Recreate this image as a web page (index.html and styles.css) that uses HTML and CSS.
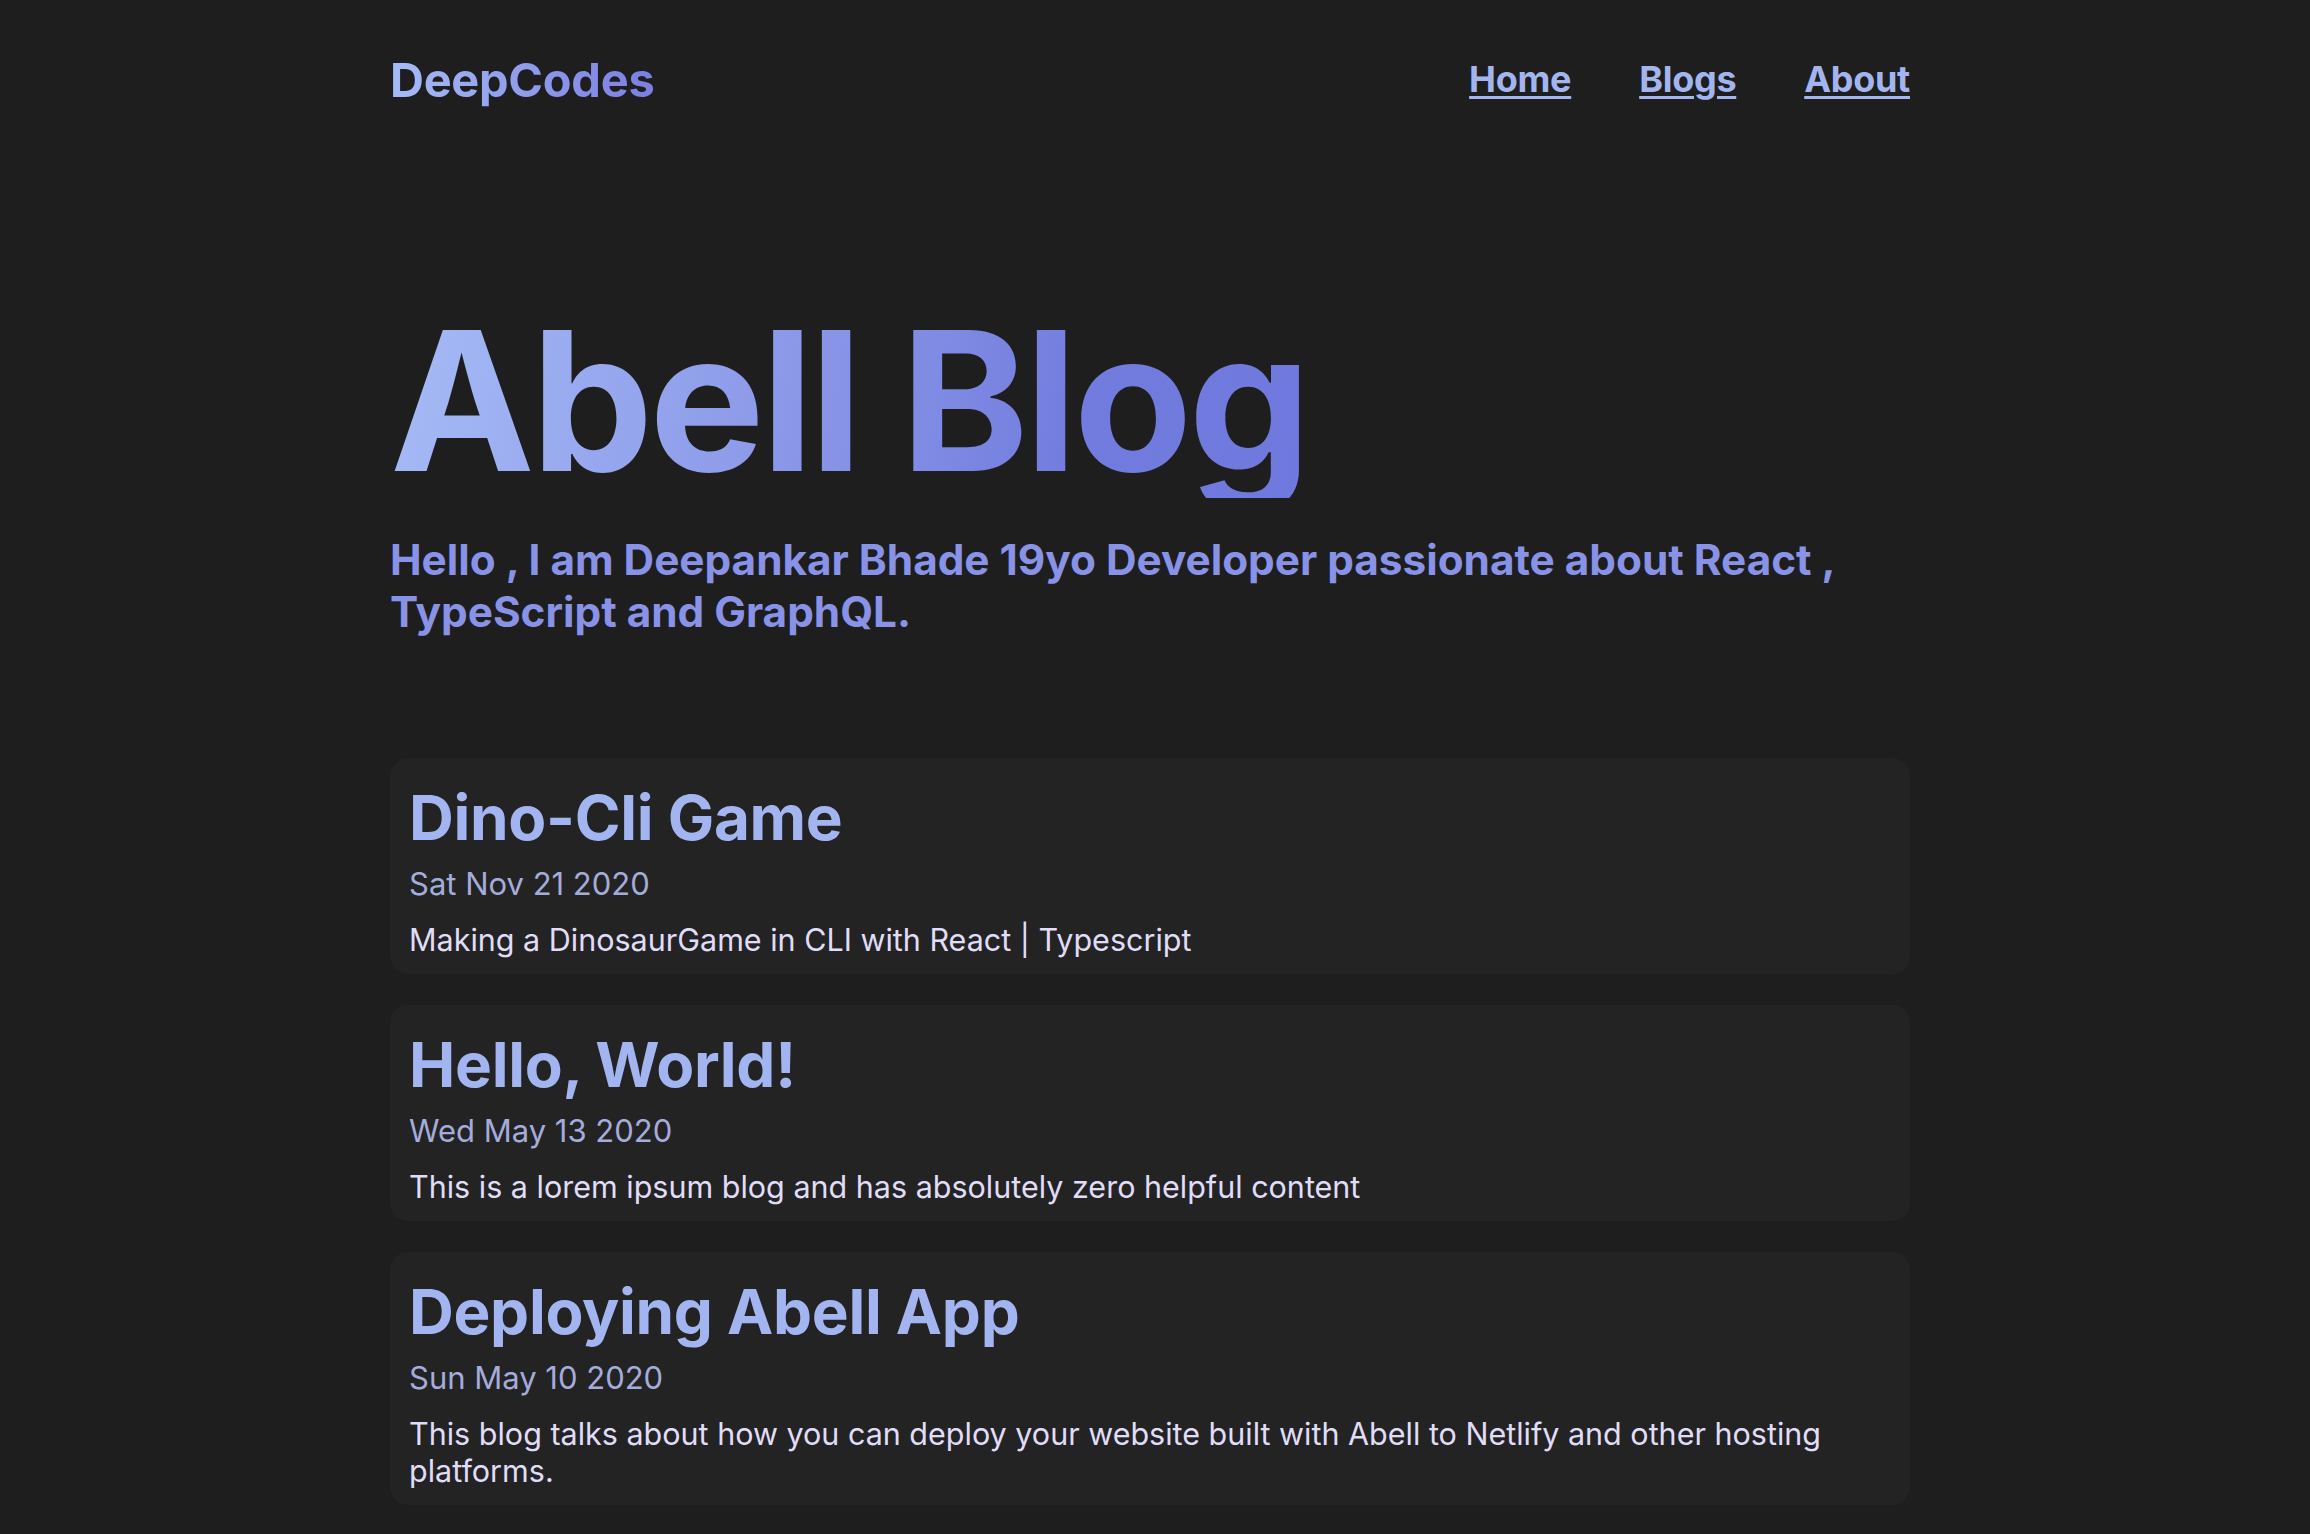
FILE: index.html
```html
<!DOCTYPE html>
<html lang="en">
<head>
<meta charset="utf-8">
<title>DeepCodes</title>
<link rel="stylesheet" href="styles.css">
</head>
<body>
<div class="container">
  <header class="site-header">
    <a class="brand" href="#">DeepCodes</a>
    <nav class="nav">
      <a href="#">Home</a>
      <a href="#">Blogs</a>
      <a href="#">About</a>
    </nav>
  </header>
  <main>
    <section class="hero">
      <h1 class="hero-title">Abell Blog</h1>
      <p class="hero-sub">Hello , I am Deepankar Bhade 19yo Developer passionate about React , TypeScript and GraphQL.</p>
    </section>
    <section class="posts">
      <article class="post">
        <h2 class="post-title">Dino-Cli Game</h2>
        <div class="post-date">Sat Nov 21 2020</div>
        <p class="post-desc">Making a DinosaurGame in CLI with React | Typescript</p>
      </article>
      <article class="post">
        <h2 class="post-title">Hello, World!</h2>
        <div class="post-date">Wed May 13 2020</div>
        <p class="post-desc">This is a lorem ipsum blog and has absolutely zero helpful content</p>
      </article>
      <article class="post">
        <h2 class="post-title">Deploying Abell App</h2>
        <div class="post-date">Sun May 10 2020</div>
        <p class="post-desc">This blog talks about how you can deploy your website built with Abell to Netlify and other hosting platforms.</p>
      </article>
    </section>
  </main>
</div>
</body>
</html>
```

FILE: styles.css
```css
html, body {
  margin: 0;
  padding: 0;
  background: #1e1e1e;
}

body {
  font-family: Inter, "Noto Sans", "Liberation Sans", sans-serif;
  color: #e0ddf8;
  padding-right: 10px;
}

.container {
  width: 1520px;
  margin: 0 auto;
}

.site-header {
  display: flex;
  justify-content: space-between;
  align-items: center;
  padding-top: 51px;
}

.brand {
  font-size: 47px;
  line-height: 57px;
  font-weight: 700;
  text-decoration: none;
  letter-spacing: -0.3px;
  background: linear-gradient(90deg, #a6bbf6 0%, #7a7fe2 100%);
  -webkit-background-clip: text;
  background-clip: text;
  color: transparent;
}

.nav {
  display: flex;
  gap: 68px;
}

.nav a {
  font-size: 36px;
  line-height: 45px;
  font-weight: 700;
  letter-spacing: -0.3px;
  color: #a3b5ee;
  text-decoration: underline;
  text-decoration-thickness: 3px;
  text-underline-offset: 4px;
}

.hero {
  padding-top: 196px;
}

.hero-title {
  margin: 0;
  display: inline-block;
  font-size: 194px;
  line-height: 194px;
  font-weight: 700;
  letter-spacing: -3.9px;
  background: linear-gradient(100deg, #a6bbf6 0%, #8a97e8 45%, #727cde 75%, #6f78dd 100%);
  -webkit-background-clip: text;
  background-clip: text;
  color: transparent;
}

.hero-sub {
  margin: 36px 0 0;
  font-size: 42.3px;
  line-height: 52px;
  font-weight: 700;
  color: #8892e6;
  max-width: 1500px;
}

.posts {
  display: flex;
  flex-direction: column;
  gap: 31px;
  margin-top: 120px;
}

.post {
  background: #232323;
  border-radius: 18px;
  padding: 23px 19px 16px;
}

.post-title {
  margin: 0;
  font-size: 62px;
  line-height: 74px;
  font-weight: 700;
  letter-spacing: -0.3px;
  color: #a3b5f0;
}

.post-date {
  margin-top: 10px;
  font-size: 31px;
  line-height: 37px;
  color: #a4acdc;
}

.post-desc {
  margin: 19px 0 0;
  font-size: 30.5px;
  line-height: 37px;
  color: #e0ddf8;
}
```
